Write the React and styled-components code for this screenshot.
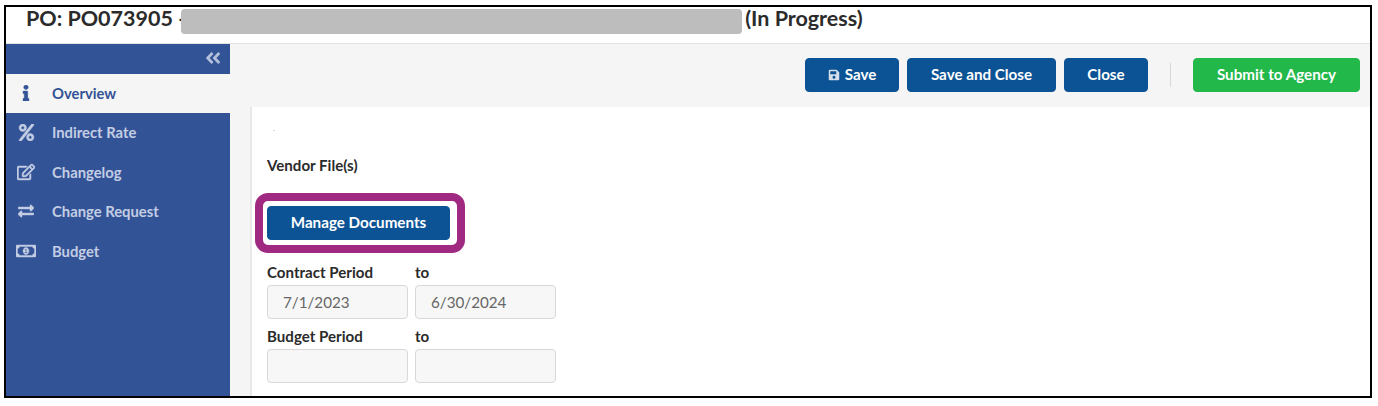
import React from "react";
import styled, { createGlobalStyle } from "styled-components";
import {
  FaAngleDoubleLeft,
  FaExchangeAlt,
  FaInfo,
  FaPercent,
  FaRegEdit,
  FaRegMoneyBillAlt,
  FaSave,
} from "react-icons/fa";

const GlobalStyle = createGlobalStyle`
  html, body {
    margin: 0;
    padding: 0;
    background: #fff;
    font-family: Lato, "Open Sans", sans-serif;
    overflow: hidden;
  }
`;

const navItems = [
  { label: "Overview", icon: <FaInfo />, size: 16, active: true },
  { label: "Indirect Rate", icon: <FaPercent />, size: 17 },
  { label: "Changelog", icon: <FaRegEdit />, size: 18 },
  { label: "Change Request", icon: <FaExchangeAlt />, size: 16 },
  { label: "Budget", icon: <FaRegMoneyBillAlt />, size: 20 },
];

const App = () => {
  return (
    <>
      <GlobalStyle />
      <Frame>
        <Header>
          <HeaderText>PO: PO073905 -</HeaderText>
          <Redaction />
          <HeaderText>(In Progress)</HeaderText>
        </Header>
        <Body>
          <Sidebar>
            <Collapse>
              <FaAngleDoubleLeft />
            </Collapse>
            {navItems.map((item) => (
              <NavItem key={item.label} $active={item.active}>
                <NavIcon $size={item.size}>{item.icon}</NavIcon>
                {item.label}
              </NavItem>
            ))}
          </Sidebar>
          <Main>
            <Toolbar>
              <Button>
                <SaveIcon />
                Save
              </Button>
              <Button $width="149px">Save and Close</Button>
              <Button $width="84px">Close</Button>
              <Divider />
              <Button $width="167px" $green>
                Submit to Agency
              </Button>
            </Toolbar>
            <Gutter>
              <Content>
                <Speck />
                <VendorLabel>Vendor File(s)</VendorLabel>
                <Highlight>
                  <Button $width="183px">Manage Documents</Button>
                </Highlight>
                <PeriodGrid>
                  <Label>Contract Period</Label>
                  <Label>to</Label>
                  <Field>7/1/2023</Field>
                  <Field>6/30/2024</Field>
                  <Label>Budget Period</Label>
                  <Label>to</Label>
                  <Field />
                  <Field />
                </PeriodGrid>
              </Content>
            </Gutter>
          </Main>
        </Body>
      </Frame>
    </>
  );
};

const Frame = styled.div`
  width: 1368px;
  height: 393px;
  margin: 5px 0 0 4px;
  box-sizing: border-box;
  border: 2px solid #000;
  display: flex;
  flex-direction: column;
  overflow: hidden;
  background: #fff;
`;

const Header = styled.div`
  height: 37px;
  flex: none;
  box-sizing: border-box;
  padding: 2px 0 0 20px;
  display: flex;
  align-items: flex-start;
  border-bottom: 1px solid #e2e2e2;
`;

const HeaderText = styled.span`
  margin-top: -3px;
  font-size: 21.5px;
  line-height: 24px;
  font-weight: 700;
  color: #2b2b2b;
  white-space: nowrap;
`;

const Redaction = styled.span`
  width: 561px;
  height: 25px;
  margin-left: -5px;
  margin-right: 3px;
  background: #bdbdbd;
  border-radius: 4px;
`;

const Body = styled.div`
  flex: 1;
  display: flex;
  min-height: 0;
`;

const Sidebar = styled.nav`
  width: 224px;
  flex: none;
  background: #335397;
`;

const Collapse = styled.div`
  height: 30px;
  box-sizing: border-box;
  padding: 0 8px 2px 0;
  display: flex;
  align-items: center;
  justify-content: flex-end;
  color: #b4c0dc;
  font-size: 18px;
`;

const NavItem = styled.div`
  height: ${(p) => (p.$active ? "39px" : "39.5px")};
  box-sizing: border-box;
  padding: 0 0 1px 10px;
  display: flex;
  align-items: center;
  font-size: 14.8px;
  font-weight: 700;
  background: ${(p) => (p.$active ? "#f5f5f5" : "transparent")};
  color: ${(p) => (p.$active ? "#335397" : "#c3cde3")};
`;

const NavIcon = styled.span`
  width: 20px;
  margin-right: 16px;
  display: flex;
  align-items: center;
  justify-content: center;
  font-size: ${(p) => p.$size}px;
  color: inherit;

  svg {
    stroke: currentColor;
    stroke-width: 14;
  }
`;

const Main = styled.div`
  flex: 1;
  display: flex;
  flex-direction: column;
  min-width: 0;
`;

const Toolbar = styled.div`
  height: 63px;
  flex: none;
  box-sizing: border-box;
  background: #f5f5f5;
  padding: 14px 10px 0 0;
  display: flex;
  justify-content: flex-end;
  align-items: flex-start;
  gap: 8px;
`;

const Button = styled.button`
  width: ${(p) => p.$width || "94px"};
  height: 34px;
  padding: 0 0 3px;
  border: 1px solid ${(p) => (p.$green ? "#22b84a" : "#0b5394")};
  border-radius: 4px;
  background: ${(p) => (p.$green ? "#22b84a" : "#0b5394")};
  color: #fff;
  font-family: inherit;
  font-size: 15.2px;
  font-weight: 700;
  display: flex;
  align-items: center;
  justify-content: center;
`;

const SaveIcon = styled(FaSave)`
  font-size: 12px;
  margin-right: 5px;
  margin-top: 3px;
  color: #d5deea;
`;

const Divider = styled.span`
  width: 1px;
  height: 24px;
  margin: 5px 14px 0;
  background: #d8d8d8;
`;

const Gutter = styled.div`
  flex: 1;
  min-height: 0;
  background: #f5f5f5;
  padding-left: 20px;
  display: flex;
`;

const Content = styled.div`
  flex: 1;
  background: #fff;
  border-left: 2px solid #e8e8e8;
  padding-left: 15px;
`;

const Speck = styled.div`
  width: 2px;
  height: 1px;
  margin: 23px 0 0 6px;
  background: #d5d5d5;
`;

const VendorLabel = styled.div`
  margin-top: 25px;
  font-size: 15.1px;
  line-height: 18px;
  font-weight: 700;
  color: #2b2b2b;
`;

const Highlight = styled.div`
  width: fit-content;
  margin: 19px 0 0 -12px;
  padding: 5px 7px 5px 4px;
  border: 8px solid #a02a82;
  border-radius: 13px;
`;

const PeriodGrid = styled.div`
  margin-top: 11px;
  display: grid;
  grid-template-columns: 141px 141px;
  column-gap: 7px;
  justify-content: start;
`;

const Label = styled.div`
  height: 21px;
  font-size: 15.1px;
  line-height: 16px;
  font-weight: 700;
  color: #2b2b2b;
`;

const Field = styled.div`
  height: 34px;
  margin-bottom: 9px;
  box-sizing: border-box;
  padding-left: 15px;
  border: 1px solid #d8d8d8;
  border-radius: 4px;
  background: #f7f7f7;
  display: flex;
  align-items: center;
  font-size: 15.2px;
  color: #666;
`;

export default App;
